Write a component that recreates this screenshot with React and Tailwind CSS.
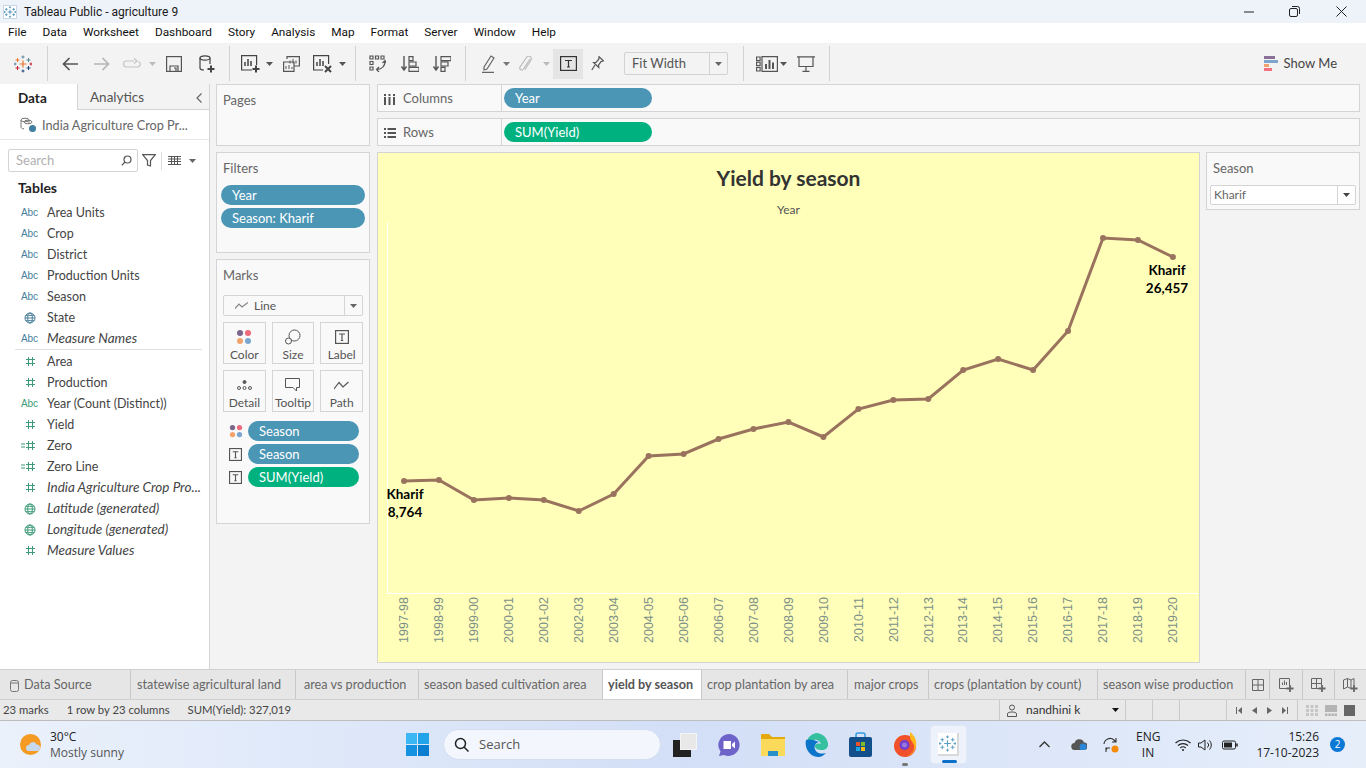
import React from "react";

const points = [481, 480, 500, 498, 500, 511, 494, 456, 454, 439, 429, 422, 437, 409, 400, 399, 370, 359, 370, 331, 238, 240, 257];
const years = ["1997-98", "1998-99", "1999-00", "2000-01", "2001-02", "2002-03", "2003-04", "2004-05", "2005-06", "2006-07", "2007-08", "2008-09", "2009-10", "2010-11", "2011-12", "2012-13", "2013-14", "2014-15", "2015-16", "2016-17", "2017-18", "2018-19", "2019-20"];

const ic = { fill: "none", stroke: "currentColor", strokeWidth: 1.2 };

// ---------- small icons ----------
const Caret = ({ className = "text-[#777]" }) => (
  <svg width="7" height="4" viewBox="0 0 7 4" className={className}>
    <path d="M0 0h7L3.500 4z" fill="currentColor" />
  </svg>
);

const TableauLogo = ({ c1 = "#e8762d", c2 = "#59879b", c3 = "#c72037", c4 = "#1f447e", size = 18 }) => (
  <svg width={size} height={size} viewBox="0 0 18 18" fill="none" strokeWidth="1">
    <path d="M9 5.500v7M5.500 9h7" stroke={c1} strokeWidth="1.200" />
    <path d="M3.500 3v4M1.500 5h4" stroke={c1} />
    <path d="M14.500 3v4M12.500 5h4" stroke={c2} />
    <path d="M3.500 11v4M1.500 13h4" stroke={c3} />
    <path d="M14.500 11v4M12.500 13h4" stroke={c4} />
    <path d="M9 0.500v3M7.500 2h3" stroke={c2} />
    <path d="M9 14.500v3M7.500 16h3" stroke={c4} />
    <path d="M1 7.500v3M0 9h2.500" stroke={c2} />
    <path d="M17 7.500v3M15.500 9h2.500" stroke={c3} />
  </svg>
);

const TBox = ({ size = 14 }) => (
  <svg width={size} height={size} viewBox="0 0 14 14" className="text-[#555]" {...ic}>
    <rect x="0.600" y="0.600" width="12.800" height="12.800" />
    <path d="M4 4h6M7 4v6.500M5.800 10.500h2.400" />
  </svg>
);

const Dots = ({ size = 16 }) => (
  <svg width={size} height={size} viewBox="0 0 16 16">
    <circle cx="4" cy="4" r="3" fill="#7b668c" />
    <circle cx="12" cy="4" r="3" fill="#ef6a7a" />
    <circle cx="4" cy="12" r="3" fill="#f1a36b" />
    <circle cx="12" cy="12" r="3" fill="#7aa5cf" />
  </svg>
);

const Hash = ({ eq }) => (
  <svg width="22" height="11" viewBox="0 0 22 11" className="text-[#3d9b78]" fill="none" stroke="currentColor" strokeWidth="1">
    <path d="M9.500 1v9M13.500 1v9M7 3.500h9M7 7.500h9" />
    {eq && <path d="M2 4h4M2 7h4" />}
  </svg>
);

const Globe = ({ green }) => (
  <svg width="12" height="12" viewBox="0 0 12 12" className={green ? "text-[#3d9b78]" : "text-[#4a7f9c]"} fill="none" stroke="currentColor" strokeWidth="1">
    <circle cx="6" cy="6" r="5" />
    <ellipse cx="6" cy="6" rx="2.300" ry="5" />
    <path d="M1 6h10M1.800 3.300h8.400M1.800 8.700h8.400" />
  </svg>
);

const Sep = ({ ml }) => <div className={`w-px h-[35px] bg-[#d2d2d2] ${ml}`} />;

const Pill = ({ label, green, className = "" }) => (
  <div className={`h-5 rounded-full flex items-center pt-px text-white text-[13px] ${green ? "bg-[#00b180]" : "bg-[#4b96b5]"} ${className}`}>
    {label}
  </div>
);

// ---------- top of the window ----------
const TitleBar = () => (
  <div className="h-[23px] bg-[#eef2f9] flex items-center font-['Roboto'] text-[12px] text-[#1a1a1a] relative">
    <div className="ml-[3px] w-[14px] h-[14px] bg-white border border-[#c9d6e4] flex items-center justify-center">
      <TableauLogo size={12} c1="#2b7fae" c2="#2b7fae" c3="#2b7fae" c4="#2b7fae" />
    </div>
    <span className="ml-[7px]">Tableau Public - agriculture 9</span>
    <div className="ml-auto flex items-center text-[#222]">
      <svg width="10" height="2" viewBox="0 0 10 2" className="mr-[35px]"><path d="M0 1h10" stroke="currentColor" /></svg>
      <svg width="11" height="11" viewBox="0 0 11 11" className="mr-[36px]" {...ic} strokeWidth="1">
        <rect x="0.500" y="2.500" width="8" height="8" rx="1.500" />
        <path d="M3 .5h5.500a2 2 0 0 1 2 2V8" />
      </svg>
      <svg width="11" height="11" viewBox="0 0 11 11" className="mr-[19px]" {...ic} strokeWidth="1"><path d="M.5.5l10 10M10.500.5l-10 10" /></svg>
    </div>
  </div>
);

const MenuBar = () => (
  <div className="h-5 bg-white flex items-center gap-4 pl-2 font-['Roboto'] text-[11.800px] text-[#111]">
    {["File", "Data", "Worksheet", "Dashboard", "Story", "Analysis", "Map", "Format", "Server", "Window", "Help"].map((m) => (
      <span key={m}>{m}</span>
    ))}
  </div>
);

const Toolbar = () => (
  <div className="h-[41px] bg-[#f3f3f3] flex items-center shrink-0">
    <div className="ml-[14px]"><TableauLogo /></div>
    <Sep ml="ml-[15px]" />
    {/* back, forward, redo */}
    <svg width="16" height="14" viewBox="0 0 16 14" className="ml-[14px] text-[#555]" fill="none" stroke="currentColor" strokeWidth="1.700"><path d="M16 7H1.500M7.500 1l-6 6 6 6" /></svg>
    <svg width="16" height="14" viewBox="0 0 16 14" className="ml-[16px] text-[#b5b5b5]" fill="none" stroke="currentColor" strokeWidth="1.700"><path d="M0 7h14.500M8.500 1l6 6-6 6" /></svg>
    <svg width="18" height="11" viewBox="0 0 18 11" className="ml-[13px] text-[#c4c4c4]" {...ic}><path d="M11 3H3.500a2.800 2.800 0 0 0 0 6h11a2.800 2.800 0 0 0 1-5.400M11 .5L14 3l-3 2.500" /></svg>
    <div className="ml-[8px]"><Caret className="text-[#bbb]" /></div>
    <svg width="16" height="16" viewBox="0 0 16 16" className="ml-[10px] text-[#555]" {...ic}><rect x="0.600" y="0.600" width="14.800" height="14.800" /><path d="M4 15v-5h8v5M8 12h2v3" /></svg>
    <svg width="16" height="18" viewBox="0 0 16 18" className="ml-[17px] text-[#444]" {...ic}>
      <ellipse cx="6" cy="3" rx="5" ry="2.200" />
      <path d="M1 3v10c0 1 1.500 2 4 2M11 3v6" />
      <path d="M12 10.500v7M8.500 14h7" strokeWidth="2" />
    </svg>
    <Sep ml="ml-[14px]" />
    {/* sheets */}
    <svg width="19" height="18" viewBox="0 0 19 18" className="ml-[11px] text-[#444]" {...ic}>
      <path d="M11 15H.6V.6h15V10" />
      <path d="M4 11V7M7 11V4M10 11V6" strokeWidth="1.500" />
      <path d="M15 10.500v7M11.500 14h7" strokeWidth="2" />
    </svg>
    <div className="ml-[6px]"><Caret className="text-[#555]" /></div>
    <svg width="17" height="16" viewBox="0 0 17 16" className="ml-[10px] text-[#555]" {...ic}>
      <path d="M4 3V.6h12.400V10H11" />
      <path d="M.6 6H11v9.400H.6z" />
      <path d="M7 7.500V4.500M10 7.500V3M13 7.500V4.500M3 13v-3M6 13v-4M9 13v-2" strokeWidth="1" />
    </svg>
    <svg width="19" height="18" viewBox="0 0 19 18" className="ml-[13px] text-[#444]" {...ic}>
      <path d="M10 15H.6V.6h15V9" />
      <path d="M4 11V7M7 11V4M10 11V6" strokeWidth="1.500" />
      <path d="M12 11l6 6M18 11l-6 6" strokeWidth="2" />
    </svg>
    <div className="ml-[7px]"><Caret className="text-[#555]" /></div>
    <Sep ml="ml-[9px]" />
    {/* swap and sort */}
    <svg width="17" height="17" viewBox="0 0 17 17" className="ml-[13px] text-[#555]" {...ic}>
      <path d="M1 1h3v3H1zM6.500 1h3v3h-3zM12 1h3v3h-3zM1 6.500h3v3H1zM1 12h3v3H1z" />
      <path d="M16 6c0 5-3 8-8 8.500M10 12l-2.500 2.500L10 17M13.500 8L16 5.500 17 8" />
    </svg>
    <svg width="18" height="16" viewBox="0 0 18 16" className="ml-[15px] text-[#555]" {...ic}>
      <path d="M3 0v14M.5 10.500L3 14l2.500-3.500" strokeWidth="1.400" />
      <path d="M8 .6h4v4H8zM8 6h7v4H8zM8 11.400h10v4H8z" />
    </svg>
    <svg width="18" height="16" viewBox="0 0 18 16" className="ml-[14px] text-[#555]" {...ic}>
      <path d="M3 0v14M.5 10.500L3 14l2.500-3.500" strokeWidth="1.400" />
      <path d="M8 .6h10v4H8zM8 6h7v4H8zM8 11.400h4v4H8z" />
    </svg>
    <Sep ml="ml-[14px]" />
    {/* highlight, annotate, labels */}
    <svg width="13" height="18" viewBox="0 0 13 18" className="ml-[16px] text-[#666]" {...ic}>
      <path d="M2 12L9 1l3 2-7 11-3 1zM0 17.300h12" />
    </svg>
    <div className="ml-[8px]"><Caret className="text-[#777]" /></div>
    <svg width="13" height="16" viewBox="0 0 13 16" className="ml-[9px] text-[#bbb]" {...ic}>
      <path d="M11 3L4.500 13a2 2 0 0 1-3.500-2L7.500 1.500a2.500 2.500 0 0 1 4.500 2.500L6 13.500" />
    </svg>
    <div className="ml-[11px]"><Caret className="text-[#bbb]" /></div>
    <div className="ml-[3px] w-[30px] h-[30px] bg-[#e5e5e5] flex items-center justify-center">
      <svg width="17" height="15" viewBox="0 0 17 15" className="text-[#333]" {...ic}>
        <rect x="0.600" y="0.600" width="15.800" height="13.800" />
        <path d="M5 4.500h7M8.500 4.500v6.500M7 11h3" />
      </svg>
    </div>
    <svg width="13" height="15" viewBox="0 0 13 15" className="ml-[8px] text-[#555]" {...ic}>
      <path d="M8 .8l4.500 4-2.500.8-2.500 3.500.3 2.400-5.300-5 2.500-.2L7.800 3.200zM4 9L.8 14" />
    </svg>
    <div className="ml-[20px] w-[104px] h-[23px] border border-[#d2d2d2] rounded-[2px] bg-[#f3f3f3] flex items-center font-['Lato'] text-[13px] text-[#555]">
      <span className="ml-[7px] flex-1">Fit Width</span>
      <div className="w-[18px] h-full border-l border-[#d2d2d2] flex items-center justify-center">
        <Caret className="text-[#666]" />
      </div>
    </div>
    <Sep ml="ml-[15px]" />
    <svg width="22" height="16" viewBox="0 0 22 16" className="ml-[12px] text-[#555]" {...ic}>
      <path d="M.6 1h3.500v3.500H.6zM.6 6.200h3.500v3.500H.6zM.6 11.500h3.500V15H.6zM6 .6h15.400v14.800H6z" />
      <path d="M10 13V8M13.500 13V4M17 13V6.500" strokeWidth="2" />
    </svg>
    <div className="ml-[2px]"><Caret className="text-[#555]" /></div>
    <svg width="18" height="16" viewBox="0 0 18 16" className="ml-[10px] text-[#555]" {...ic}>
      <path d="M0 .8h18M2 .8v9.700h14V.8M9 10.500V15M5.500 15.300h7" />
    </svg>
    <Sep ml="ml-[14px]" />
    <div className="ml-auto mr-[29px] flex items-center font-['Lato'] text-[13px] text-[#444]">
      <svg width="14" height="15" viewBox="0 0 14 15" className="mr-[6px]">
        <rect width="11" height="3" fill="#8a7097" />
        <rect y="4" width="14" height="3" fill="#7ea6cc" />
        <rect y="8" width="5" height="3" fill="#f2a36b" />
        <rect y="12" width="8" height="3" fill="#f0707f" />
      </svg>
      Show Me
    </div>
  </div>
);

// ---------- data pane ----------
const fields = [
  ["abc", "Area Units"], ["abc", "Crop"], ["abc", "District"], ["abc", "Production Units"], ["abc", "Season"], ["globe", "State"], ["abc", "Measure Names", true],
];
const measures = [
  ["hash", "Area"], ["hash", "Production"], ["abcg", "Year (Count (Distinct))"], ["hash", "Yield"], ["eq", "Zero"], ["eq", "Zero Line"],
  ["hash", "India Agriculture Crop Pro...", true], ["globeg", "Latitude (generated)", true], ["globeg", "Longitude (generated)", true], ["hash", "Measure Values", true],
];

const FieldIcon = ({ type }) => {
  if (type === "abc") return <span className="text-[10px] text-[#4a7f9c] font-['Liberation_Sans']">Abc</span>;
  if (type === "abcg") return <span className="text-[10px] text-[#3d9b78] font-['Liberation_Sans']">Abc</span>;
  if (type === "globe") return <Globe />;
  if (type === "globeg") return <Globe green />;
  return <Hash eq={type === "eq"} />;
};

const FieldRow = ({ type, name, italic }) => (
  <div className="h-[21px] flex items-center">
    <div className="w-[47px] pl-[18px] pr-[6px] flex justify-center shrink-0 overflow-visible"><FieldIcon type={type} /></div>
    <span className={`text-[#444] whitespace-nowrap ${italic ? "italic text-[13.5px]" : "text-[12.500px] pt-[2px]"}`}>{name}</span>
  </div>
);

const DataPane = () => (
  <div className="w-[210px] shrink-0 bg-white border-r border-[#d4d4d4] flex flex-col font-['Lato']">
    <div className="h-[26px] flex shrink-0 text-[13.500px]">
      <div className="w-[77px] flex items-center pl-[18px] pt-[2px] font-bold text-[#222]">Data</div>
      <div className="flex-1 bg-[#f3f3f3] border-l border-b border-[#d4d4d4] flex items-center pl-[12px] pt-[2px] text-[#555]">
        Analytics
        <svg width="6" height="10" viewBox="0 0 6 10" className="ml-auto mr-[7px] text-[#666]" {...ic}><path d="M5.500.5L1 5l4.500 4.500" /></svg>
      </div>
    </div>
    <div className="h-[30px] flex items-center border-b border-[#e6e6e6] shrink-0">
      <svg width="17" height="16" viewBox="0 0 17 16" className="ml-[20px] text-[#777]" fill="none" stroke="currentColor" strokeWidth="1">
        <ellipse cx="5" cy="3" rx="4" ry="1.800" />
        <path d="M1 3v7c0 1 1 1.800 3 1.800M9 3v3" />
        <ellipse cx="8" cy="5" rx="4" ry="1.800" />
        <circle cx="12.500" cy="11.500" r="3.500" fill="#3f7f9f" stroke="none" />
      </svg>
      <span className="ml-[5px] pt-[2px] text-[12.700px] text-[#666] whitespace-nowrap">India Agriculture Crop Pr...</span>
    </div>
    <div className="h-[9px] shrink-0" />
    <div className="flex items-center shrink-0">
      <div className="ml-[8px] w-[130px] h-[23px] border border-[#d4d4d4] rounded-[2px] flex items-center pl-[7px] pr-[5px] text-[13px] text-[#b0b0b0]">
        Search
        <svg width="11" height="11" viewBox="0 0 11 11" className="ml-auto text-[#555]" {...ic}><circle cx="6.500" cy="4.500" r="3.500" /><path d="M4 7L.8 10.300" /></svg>
      </div>
      <svg width="14" height="13" viewBox="0 0 14 13" className="ml-[4px] text-[#555]" {...ic}><path d="M.6.6h12.800L8.500 6.500V12L5.500 11V6.500z" /></svg>
      <div className="w-px h-[18px] bg-[#ddd] ml-[5px]" />
      <svg width="13" height="9" viewBox="0 0 13 9" className="ml-[6px] text-[#555]" fill="none" stroke="currentColor" strokeWidth="1"><path d="M0 .5h13M0 3h13M0 5.500h13M0 8.500h13M3.500 0v9M6.500 0v9M9.500 0v9" /></svg>
      <div className="ml-[8px]"><Caret className="text-[#666]" /></div>
    </div>
    <div className="mt-[6px] pl-[18px] h-[18px] flex items-center text-[14px] font-bold text-[#222] shrink-0">Tables</div>
    <div className="mt-[6px]">
      {fields.map(([t, n, i]) => <FieldRow key={n} type={t} name={n} italic={i} />)}
    </div>
    <div className="h-px bg-[#e0e0e0] ml-[15px] mr-[7px] mb-px" />
    <div>
      {measures.map(([t, n, i]) => <FieldRow key={n} type={t} name={n} italic={i} />)}
    </div>
  </div>
);

// ---------- shelves ----------
const Card = ({ title, className = "", children }) => (
  <div className={`border border-[#d4d4d4] bg-[#f9f9f9] ${className}`}>
    <div className="pl-[6px] pt-[7px] text-[13px] leading-[16px] text-[#666]">{title}</div>
    {children}
  </div>
);

const MarkBtn = ({ label, children }) => (
  <div className="h-[42px] border border-[#d4d4d4] flex flex-col items-center justify-end text-[12px] text-[#555]">
    <div className="h-[20px] flex items-center">{children}</div>
    <span className="leading-[16px]">{label}</span>
  </div>
);

const MarkRow = ({ icon, label, green }) => (
  <div className="flex items-center h-[20px]">
    <div className="w-[25px] flex justify-center">{icon}</div>
    <Pill label={label} green={green} className="w-[111px] pl-[11px]" />
  </div>
);

const Shelves = () => (
  <div className="w-[154px] shrink-0 ml-[6px] mr-[6px] flex flex-col gap-[6px] font-['Lato']">
    <Card title="Pages" className="h-[62px]" />
    <Card title="Filters" className="h-[101px]">
      <div className="mt-[9px] ml-[4px] flex flex-col gap-[3px]">
        <Pill label="Year" className="w-[144px] pl-[11px]" />
        <Pill label="Season: Kharif" className="w-[144px] pl-[11px]" />
      </div>
    </Card>
    <Card title="Marks" className="h-[265px]">
      <div className="mt-[12px] mx-[6px] h-[21px] border border-[#d4d4d4] rounded-[2px] flex items-center text-[12px] text-[#555]">
        <svg width="13" height="7" viewBox="0 0 13 7" className="ml-[11px] text-[#888]" {...ic}><path d="M0 6.500L4 2l3 3 6-4.500" /></svg>
        <span className="ml-[6px] flex-1">Line</span>
        <div className="w-[18px] h-full border-l border-[#d4d4d4] flex items-center justify-center"><Caret className="text-[#666]" /></div>
      </div>
      <div className="mt-[6px] mx-[6px] grid grid-cols-3 gap-x-[6px] gap-y-[6px]">
        <MarkBtn label="Color"><Dots /></MarkBtn>
        <MarkBtn label="Size">
          <svg width="16" height="16" viewBox="0 0 16 16" className="text-[#555]" {...ic} strokeWidth="1"><circle cx="9.500" cy="6.500" r="5.500" /><circle cx="3.500" cy="12" r="3" fill="#f9f9f9" /></svg>
        </MarkBtn>
        <MarkBtn label="Label"><TBox /></MarkBtn>
        <MarkBtn label="Detail">
          <svg width="15" height="12" viewBox="0 0 15 12" className="text-[#555]" fill="none" stroke="currentColor" strokeWidth="1"><circle cx="7.500" cy="3" r="1.500" fill="currentColor" /><circle cx="2" cy="9" r="1.500" /><circle cx="7.500" cy="9" r="1.500" /><circle cx="13" cy="9" r="1.500" /></svg>
        </MarkBtn>
        <MarkBtn label="Tooltip">
          <svg width="15" height="14" viewBox="0 0 15 14" className="text-[#555]" {...ic} strokeWidth="1"><path d="M.5.5h14v9h-3v3.500l-3.500-3.500H.5z" /></svg>
        </MarkBtn>
        <MarkBtn label="Path">
          <svg width="15" height="9" viewBox="0 0 15 9" className="text-[#555]" {...ic}><path d="M0 8l5-6.500L9 6l5.500-5" /></svg>
        </MarkBtn>
      </div>
      <div className="mt-[9px] ml-[6px] flex flex-col gap-[3px]">
        <MarkRow icon={<Dots size={14} />} label="Season" />
        <MarkRow icon={<TBox size={13} />} label="Season" />
        <MarkRow icon={<TBox size={13} />} label="SUM(Yield)" green />
      </div>
    </Card>
  </div>
);

const ShelfRow = ({ icon, label, pill, green }) => (
  <div className="h-[28px] shrink-0 border border-[#d4d4d4] bg-[#f9f9f9] flex items-center font-['Lato'] text-[13px] text-[#666]">
    <div className="w-[124px] h-full border-r border-[#d4d4d4] flex items-center pl-[6px] pt-[2px] shrink-0">
      <div className="w-[19px]">{icon}</div>{label}
    </div>
    <Pill label={pill} green={green} className="ml-[2px] w-[148px] pl-[11px]" />
  </div>
);

// ---------- chart ----------
const Chart = () => (
  <div className="flex-1 bg-[#ffffb9] border border-[#d4d4d4] flex flex-col font-['Lato'] min-w-0">
    <div className="h-[49px] shrink-0 flex items-end justify-center text-[21px] font-bold text-[#333] leading-[26px] pb-[11px]">Yield by season</div>
    <div className="h-[14px] shrink-0 flex items-center justify-center pt-[2px] text-[12px] text-[#555] leading-[14px]">Year</div>
    <div className="relative h-[378px] shrink-0">
      <svg width="822" height="378" viewBox="378 216 822 378" className="block">
        <path d="M387.500 222V593.500H1198" fill="none" stroke="#fff" strokeWidth="1" />
        <polyline fill="none" stroke="#9a735e" strokeWidth="3" points={points.map((y, i) => `${404 + i * 34.95},${y}`).join(" ")} />
        {points.map((y, i) => <circle key={i} cx={404 + i * 34.95} cy={y} r="3" fill="#9a735e" />)}
      </svg>
      <div className="absolute left-[8px] top-[269px] w-[38px] flex flex-col items-center text-[13.500px] leading-[18px] font-bold text-black">
        <span>Kharif</span><span>8,764</span>
      </div>
      <div className="absolute left-[766px] top-[45px] w-[46px] flex flex-col items-center text-[13.500px] leading-[18px] font-bold text-black">
        <span>Kharif</span><span>26,457</span>
      </div>
    </div>
    <div className="flex pl-[9px] mt-[3px] h-[58px]">
      {years.map((y) => (
        <div key={y} className="w-[34.950px] flex items-start justify-center shrink-0">
          <span className="[writing-mode:vertical-rl] rotate-180 font-['Liberation_Sans'] text-[12.500px] leading-[14px] text-[#7d8f88]">{y}</span>
        </div>
      ))}
    </div>
  </div>
);

// ---------- bottom ----------
const tabs = [
  ["statewise agricultural land", "w-[165px] pl-[6px]"], ["area vs production", "w-[123px] pl-[8px]"], ["season based cultivation area", "w-[184px] pl-[5px]"],
  ["yield by season", "w-[99px] pl-[5px]", true], ["crop plantation by area", "w-[146px] pl-[5px]"], ["major crops", "w-[81px] pl-[6px]"], ["crops (plantation by count)", "w-[169px] pl-[5px]"], ["season wise production", "w-[148px] pl-[5px]"],
];

const TabBar = () => (
  <div className="h-[30px] shrink-0 bg-[#e6e6e6] border-t border-[#d0d0d0] flex font-['Lato'] text-[12.650px] text-[#666]">
    <div className="w-[131px] border-r border-[#c9c9c9] flex items-center pl-[10px] pt-[2px] shrink-0">
      <svg width="9" height="12" viewBox="0 0 9 12" className="mr-[5px] text-[#777]" {...ic} strokeWidth="1"><rect x="0.500" y="0.500" width="8" height="11" rx="2" /><path d="M.5 3h8" /></svg>
      Data Source
    </div>
    {tabs.map(([t, w, active]) => (
      <div key={t} className={`${w} shrink-0 border-r border-[#c9c9c9] flex items-center whitespace-nowrap ${active ? "bg-white font-bold text-[#555] pt-px" : "pt-[2px]"}`}>{t}</div>
    ))}
    <div className="w-[24px] shrink-0 border-r border-[#c9c9c9] flex items-center justify-center">
      <svg width="12" height="12" viewBox="0 0 12 12" className="text-[#666]" {...ic} strokeWidth="1"><path d="M.5.5h11v11H.5zM6 .5v11M.5 6h11" /></svg>
    </div>
    <div className="w-[33px] shrink-0 border-r border-[#c9c9c9] flex items-center justify-center">
      <svg width="15" height="14" viewBox="0 0 15 14" className="text-[#666]" {...ic} strokeWidth="1"><path d="M8 10.500H.5V.5h10V7M3.500 7V4.500M5.500 7V2.500M7.500 7V4" /><path d="M11 7v7M7.500 10.500h7" strokeWidth="1.800" /></svg>
    </div>
    <div className="w-[32px] shrink-0 border-r border-[#c9c9c9] flex items-center justify-center">
      <svg width="15" height="14" viewBox="0 0 15 14" className="text-[#666]" {...ic} strokeWidth="1"><path d="M8 10.500H.5V.5h10V7M5.500.5v10M.5 5.500h10" /><path d="M11 7v7M7.500 10.500h7" strokeWidth="1.800" /></svg>
    </div>
    <div className="flex-1 flex items-center justify-center">
      <svg width="15" height="14" viewBox="0 0 15 14" className="text-[#666]" {...ic} strokeWidth="1"><path d="M8 10.500L4.500 9 .5 11V2l4-1.500 3.500 1.500 3-1.500V7M4.500.5V9M8 2v8" /><path d="M11 7v7M7.500 10.500h7" strokeWidth="1.800" /></svg>
    </div>
  </div>
);

const StatusBar = () => (
  <div className="h-[22px] shrink-0 bg-[#e9e9e9] border-t border-[#d0d0d0] border-b-[#bdbdbd] border-b flex items-center font-['Lato'] text-[11.300px] text-[#444]">
    <span className="ml-[3px]">23 marks</span>
    <span className="ml-[18px]">1 row by 23 columns</span>
    <span className="ml-[18px]">SUM(Yield): 327,019</span>
    <div className="ml-auto w-[127px] h-full border-l border-r border-[#c9c9c9] flex items-center text-[12px]">
      <svg width="10" height="13" viewBox="0 0 10 13" className="ml-[7px] text-[#555]" {...ic} strokeWidth="1"><circle cx="5" cy="3.500" r="2.500" /><path d="M.5 12.500V10c0-1.500 2-2 4.500-2s4.500.5 4.500 2v2.500z" /></svg>
      <span className="ml-[9px] text-[#333]">nandhini k</span>
      <div className="ml-auto mr-[6px]"><Caret className="text-[#111]" /></div>
    </div>
    <div className="w-[27px] h-full border-r border-[#c9c9c9]" />
    <div className="w-[27px] h-full border-r border-[#c9c9c9]" />
    <div className="w-[47px] h-full border-r border-[#c9c9c9]" />
    <div className="w-[71px] h-full border-r border-[#c9c9c9] flex items-center justify-center gap-[7px] text-[#666]">
      <svg width="6" height="7" viewBox="0 0 6 7"><path d="M0 0h1v7H0zM6 0v7L2 3.500z" fill="currentColor" /></svg>
      <svg width="5" height="7" viewBox="0 0 5 7" className="ml-[3px]"><path d="M5 0v7L0 3.500z" fill="currentColor" /></svg>
      <svg width="5" height="7" viewBox="0 0 5 7" className="ml-[3px]"><path d="M0 0v7l5-3.500z" fill="currentColor" /></svg>
      <svg width="6" height="7" viewBox="0 0 6 7" className="ml-[3px]"><path d="M5 0h1v7H5zM0 0v7l4-3.500z" fill="currentColor" /></svg>
    </div>
    <div className="w-[68px] h-full flex items-center pl-[8px] gap-[4px]">
      <svg width="12" height="11" viewBox="0 0 12 11" fill="#c6c6c6"><path d="M0 0h3v3H0zM4.500 0h3v3h-3zM9 0h3v3H9zM0 4h3v3H0zM4.500 4h3v3h-3zM9 4h3v3H9zM0 8h3v3H0zM4.500 8h3v3h-3zM9 8h3v3H9z" /></svg>
      <svg width="12" height="11" viewBox="0 0 12 11" className="ml-[3px]" fill="#b4b4b4"><path d="M0 0h12v7H0zM0 8.500h2.500V11H0zM3.200 8.500h2.500V11H3.200zM6.400 8.500h2.500V11H6.400zM9.500 8.500H12V11H9.500z" /></svg>
      <div className="ml-[3px] w-[11px] h-[11px] bg-[#666]" />
    </div>
  </div>
);

const Taskbar = () => (
  <div className="h-[47px] shrink-0 bg-gradient-to-r from-[#eaf1fb] via-[#d3dff7] to-[#e6eefa] flex items-center font-['Open_Sans'] text-[12px] text-[#222]">
    <svg width="22" height="22" viewBox="0 0 22 22" className="ml-[20px]">
      <circle cx="10.500" cy="10.500" r="10.500" fill="#f59a23" />
      <path d="M9 17a3 3 0 0 1 0-6 4 4 0 0 1 7.500-.5 3 3 0 0 1 .5 6.500z" fill="#c6d9ef" />
    </svg>
    <div className="ml-[8px] leading-[16px] w-[100px]">
      <div>30°C</div>
      <div className="text-[#555]">Mostly sunny</div>
    </div>
    {/* windows logo */}
    <div className="ml-[256px] grid grid-cols-2 gap-px w-[23px] h-[23px]">
      <div className="bg-[#3bb8f3]" /><div className="bg-[#23a3ea]" />
      <div className="bg-[#1593e0]" /><div className="bg-[#0a7fd2]" />
    </div>
    <div className="ml-[14px] w-[218px] h-[31px] rounded-full bg-[#f3f6fc] border border-[#d5def0] flex items-center text-[13px] text-[#555]">
      <svg width="15" height="15" viewBox="0 0 15 15" className="ml-[10px] text-[#222]" fill="none" stroke="currentColor" strokeWidth="1.500"><circle cx="6.500" cy="6.500" r="5" /><path d="M10 10l4.500 4.500" /></svg>
      <span className="ml-[10px]">Search</span>
    </div>
    {/* task view */}
    <div className="ml-[12px] relative w-[24px] h-[24px]">
      <div className="absolute left-0 bottom-0 w-[18px] h-[17px] bg-[#222]" />
      <div className="absolute right-0 top-0 w-[17px] h-[17px] bg-[#e8e8e8] border border-[#f4f4f4]" />
    </div>
    <svg width="24" height="24" viewBox="0 0 24 24" className="ml-[20px]">
      <path d="M12 1a11 11 0 1 1-5 21l-5 1 1.500-4.500A11 11 0 0 1 12 1z" fill="#6e63c8" />
      <path d="M6.500 8h7.500v8H6.500zM15 11l3-2.500v7L15 13z" fill="#fff" />
    </svg>
    <svg width="24" height="23" viewBox="0 0 24 23" className="ml-[20px]">
      <path d="M0 2a1 1 0 0 1 1-1h7l3 3h13v19H0z" fill="#e3a90d" />
      <path d="M0 6h24v17H0z" fill="#fbd95b" />
      <path d="M7 18h10v5H7z" fill="#2b8fc7" />
    </svg>
    <svg width="24" height="24" viewBox="0 0 24 24" className="ml-[19px]">
      <path d="M12 0a12 12 0 0 1 12 12c0 3-3 5-6 5-4 0-7-1-7-4 0-2 3-3 6-2-1-3-4-5-8-4-4 1-7 5-7 5A12 12 0 0 1 12 0z" fill="#35c1a0" />
      <path d="M2 7C0 15 6 24 14 24c4 0 6-2 8-4-3 1-8 1-10-2-3-4-1-8 3-9-6-3-11-3-13-2z" fill="#0c74c9" />
    </svg>
    <svg width="23" height="25" viewBox="0 0 23 25" className="ml-[21px]">
      <path d="M7 6V3a2 2 0 0 1 2-2h5a2 2 0 0 1 2 2v3" fill="none" stroke="#2f9be0" strokeWidth="1.500" />
      <rect y="5" width="23" height="20" rx="2" fill="#134f8a" />
      <rect x="7" y="10" width="4" height="4" fill="#e8532b" /><rect x="12" y="10" width="4" height="4" fill="#7fba2c" />
      <rect x="7" y="15" width="4" height="4" fill="#1ea5e8" /><rect x="12" y="15" width="4" height="4" fill="#fbbb11" />
    </svg>
    <div className="ml-[21px] relative">
      <svg width="24" height="25" viewBox="0 0 24 25" className="block">
        <circle cx="12" cy="14" r="11" fill="#f0512a" />
        <path d="M17 0c5 4 7 9 6 14-2 7-6 10-9 10 5-2 8-6 7-11-1-3-4-5-4-8z" fill="#ffb71c" />
        <circle cx="11.500" cy="13" r="5" fill="#6f3fd0" />
        <circle cx="11.500" cy="13" r="2.500" fill="#ffffff" fillOpacity="0.300" />
      </svg>
      <div className="absolute left-[9px] top-[31px] w-[6px] h-[3px] rounded-full bg-[#777]" />
    </div>
    <div className="ml-[13px] w-[37px] h-[39px] rounded-[4px] bg-[#edf2fb] border border-[#e1e8f5] relative flex items-center justify-center">
      <div className="w-[21px] h-[23px] bg-white border-r-2 border-b-2 border-[#d9d9d9] flex items-center justify-center">
        <TableauLogo size={17} c1="#5b9fc7" c2="#5b9fc7" c3="#5b9fc7" c4="#5b9fc7" />
      </div>
      <div className="absolute left-[11px] bottom-0 w-[15px] h-[3px] rounded-full bg-[#0a6fc9]" />
    </div>
    {/* tray */}
    <svg width="11" height="7" viewBox="0 0 11 7" className="ml-[72px] text-[#333]" fill="none" stroke="currentColor" strokeWidth="1.300"><path d="M.5 6l5-5 5 5" /></svg>
    <div className="ml-[21px] relative">
      <svg width="16" height="11" viewBox="0 0 16 11" className="block"><path d="M4 11a3.500 3.500 0 0 1-.5-7A5 5 0 0 1 13 3.500 3.500 3.500 0 0 1 13 11z" fill="#555" /><circle cx="12" cy="8" r="3.500" fill="#2a86d8" /></svg>
    </div>
    <div className="ml-[16px] relative">
      <svg width="16" height="16" viewBox="0 0 16 16" className="block text-[#333]" fill="none" stroke="currentColor" strokeWidth="1.100">
        <path d="M1 7a6 6 0 0 1 10-4l2 2M13 1v4H9M3 11l1 1.500M3 15v-4h4" />
        <circle cx="12" cy="12" r="3.500" fill="#f58a07" stroke="none" />
      </svg>
    </div>
    <div className="ml-[17px] w-[24px] text-center leading-[16px] text-[12px]">ENG<div>IN</div></div>
    <svg width="16" height="12" viewBox="0 0 16 12" className="ml-[15px] text-[#222]" fill="none" stroke="currentColor" strokeWidth="1.100"><path d="M.5 4a11 11 0 0 1 15 0M3 6.500a7.500 7.500 0 0 1 10 0M5.300 9a4 4 0 0 1 5.400 0" /><circle cx="8" cy="11" r="1" fill="currentColor" stroke="none" /></svg>
    <svg width="15" height="12" viewBox="0 0 15 12" className="ml-[7px] text-[#222]" fill="none" stroke="currentColor" strokeWidth="1"><path d="M.5 4v4h2.500L7 11V1L3 4zM9.500 3.500a3.500 3.500 0 0 1 0 5M11.500 1.500a6.500 6.500 0 0 1 0 9" /></svg>
    <svg width="16" height="10" viewBox="0 0 16 10" className="ml-[9px] text-[#222]" fill="none" stroke="currentColor" strokeWidth="1"><rect x="0.500" y="1" width="13" height="8" rx="1.500" /><rect x="2" y="2.500" width="8" height="5" fill="currentColor" stroke="none" /><path d="M15 3.500v3" strokeWidth="1.500" /></svg>
    <div className="ml-auto text-right leading-[16px] w-[80px]">15:26<div>17-10-2023</div></div>
    <div className="ml-[11px] mr-[21px] w-[15px] h-[15px] rounded-full bg-[#0a78d4] text-white text-[10px] flex items-center justify-center">2</div>
  </div>
);

export default function App() {
  return (
    <div className="w-[1366px] h-[768px] overflow-hidden flex flex-col bg-[#f3f3f3]">
      <TitleBar />
      <MenuBar />
      <Toolbar />
      <div className="flex-1 min-h-0 flex">
        <DataPane />
        <Shelves />
        <div className="flex-1 min-w-0 pr-[6px] flex flex-col gap-[6px] ml-px">
          <ShelfRow
            label="Columns"
            pill="Year"
            icon={<svg width="11" height="11" viewBox="0 0 11 11" className="text-[#555]"><path d="M0 3h2v8H0zM4.500 3h2v8h-2zM9 3h2v8H9zM0 0h2v2H0zM4.500 0h2v2h-2zM9 0h2v2H9z" fill="currentColor" /></svg>}
          />
          <ShelfRow
            label="Rows"
            pill="SUM(Yield)"
            green
            icon={<svg width="12" height="10" viewBox="0 0 12 10" className="text-[#555]"><path d="M0 0h2v2H0zM0 4h2v2H0zM0 8h2v2H0zM3.500 0H12v2H3.500zM3.500 4H12v2H3.500zM3.500 8H12v2H3.500z" fill="currentColor" /></svg>}
          />
          <div className="flex flex-1 min-h-0 pb-[6px] gap-[6px]">
            <Chart />
            <div className="w-[154px] shrink-0 font-['Lato']">
              <div className="h-[58px] border border-[#d4d4d4] bg-[#f9f9f9] pt-[7px]">
                <div className="pl-[6px] text-[13px] leading-[16px] text-[#666]">Season</div>
                <div className="mt-[9px] mx-[3px] h-[20px] border border-[#d4d4d4] rounded-[2px] bg-white flex items-center text-[12px] text-[#666]">
                  <span className="pl-[3px] flex-1">Kharif</span>
                  <div className="w-[18px] h-full border-l border-[#d4d4d4] flex items-center justify-center"><Caret className="text-[#444]" /></div>
                </div>
              </div>
            </div>
          </div>
        </div>
      </div>
      <TabBar />
      <StatusBar />
      <Taskbar />
    </div>
  );
}
